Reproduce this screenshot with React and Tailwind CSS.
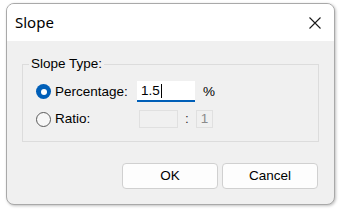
import React from "react";

export default function App() {
  const ui = { fontFamily: '"Liberation Sans", Arial, sans-serif' };
  return (
    <div className="w-[340px] h-[214px] bg-white overflow-hidden pl-[6px] pt-[3px]">
      <div className="w-[329px] h-[202px] rounded-[8px] border border-[#a9a9a9] bg-[#f0f0f0] overflow-hidden flex flex-col shadow-[1px_1px_3px_rgba(0,0,0,0.25)]">
        <div className="h-[37px] bg-white flex items-center justify-between pl-[8px] pr-[13px]">
          <span
            className="text-[15px] text-black leading-none"
            style={{ fontFamily: '"Noto Sans", "Open Sans", sans-serif' }}
          >
            Slope
          </span>
          <svg width="12" height="12" viewBox="0 0 12 12" className="block">
            <path d="M0.5 0.5 L11.5 11.5 M11.5 0.5 L0.5 11.5" stroke="#1a1a1a" strokeWidth="1.1" fill="none" />
          </svg>
        </div>
        <div className="flex-1 px-[15px] pt-[15px] text-[13.5px] text-black" style={ui}>
          <fieldset className="border border-[#dcdcdc] w-[297px] h-[86px] pl-[13px] pr-0 pb-0 m-0">
            <legend className="px-[2px] -ml-[7px] leading-[16px] text-[13.5px]">Slope Type:</legend>
            <div className="flex items-center mt-[9px] h-[21px]">
              <span className="w-[15px] h-[15px] rounded-full bg-[#005fb8] flex items-center justify-center shrink-0">
                <span className="w-[6px] h-[6px] rounded-full bg-white" />
              </span>
              <span className="ml-[4px] w-[82px] leading-none">Percentage:</span>
              <div className="w-[58px] h-[21px] bg-white border-b-2 border-[#005fb8] flex items-center pl-[4px] leading-none">
                1.5<span className="inline-block w-px h-[14px] bg-black ml-[1px]" />
              </div>
              <span className="ml-[8px] leading-none">%</span>
            </div>
            <div className="flex items-center mt-[8px] h-[18px]">
              <span className="w-[15px] h-[15px] rounded-full border border-[#5a5a5a] bg-[#f7f7f7] shrink-0" />
              <span className="ml-[4px] w-[84px] leading-none">Ratio:</span>
              <div className="w-[39px] h-[18px] bg-[#f0f0f0] border border-[#e0e0e0]" />
              <span className="w-[18px] text-center leading-none text-[#333]">:</span>
              <div className="w-[17px] h-[18px] border border-[#e0e0e0] flex items-center justify-center text-[#8a8a8a] leading-none">
                1
              </div>
            </div>
          </fieldset>
          <div className="flex justify-end gap-[4px] mt-[21px] pr-[1px]">
            <button className="w-[96px] h-[26px] rounded-[4px] border border-[#d0d0d0] bg-[#fdfdfd] text-[13.5px] leading-none">
              OK
            </button>
            <button className="w-[96px] h-[26px] rounded-[4px] border border-[#d0d0d0] bg-[#fdfdfd] text-[13.5px] leading-none">
              Cancel
            </button>
          </div>
        </div>
      </div>
    </div>
  );
}
